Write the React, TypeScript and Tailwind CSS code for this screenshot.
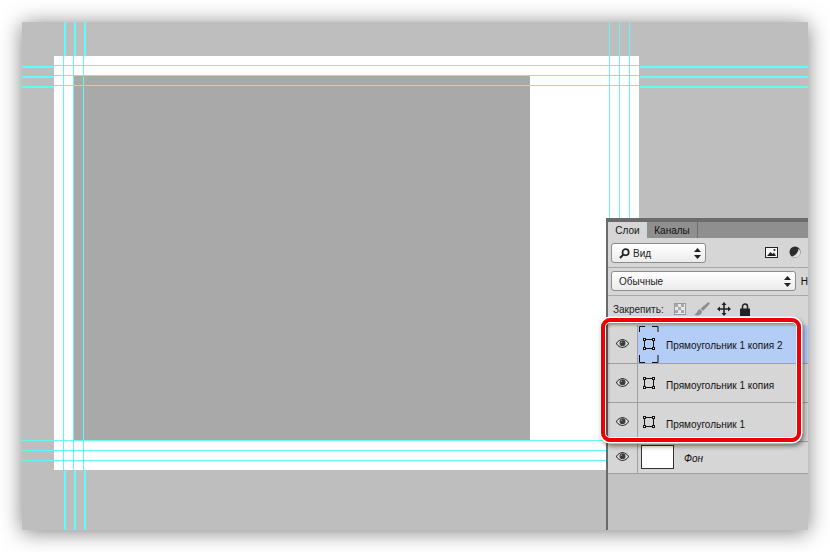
const guides = [
  // top stubs
  "left-[42px] top-0 h-[34px] w-[2px] bg-[#5ffcfc]",
  "left-[52px] top-0 h-[34px] w-[2px] bg-[#5ffcfc]",
  "left-[62px] top-0 h-[34px] w-[2px] bg-[#5ffcfc]",
  // bottom stubs
  "left-[42px] top-[448px] h-[60px] w-[2px] bg-[#5ffcfc]",
  "left-[52px] top-[448px] h-[60px] w-[2px] bg-[#5ffcfc]",
  "left-[62px] top-[448px] h-[60px] w-[2px] bg-[#5ffcfc]",
  // over the canvas
  "left-[41px] top-[34px] h-[414px] w-px bg-[#66f5f5]",
  "left-[51px] top-[34px] h-[414px] w-px bg-[#66f5f5]",
  "left-[61px] top-[34px] h-[414px] w-px bg-[#66f5f5]",
  "left-[587px] top-0 h-[196px] w-px bg-[#66f5f5]",
  "left-[597px] top-0 h-[196px] w-px bg-[#66f5f5]",
  "left-[607px] top-0 h-[196px] w-px bg-[#66f5f5]",
  // left stubs
  "left-0 top-[44px] h-[2px] w-[32px] bg-[#5ffcfc]",
  "left-0 top-[54px] h-[2px] w-[32px] bg-[#5ffcfc]",
  "left-0 top-[64px] h-[2px] w-[32px] bg-[#5ffcfc]",
  // across the canvas
  "left-[32px] top-[43px] h-px w-[585px] bg-[#66f5f5]",
  "left-[32px] top-[53px] h-px w-[585px] bg-[#66f5f5]",
  "left-[32px] top-[63px] h-px w-[585px] bg-[#66f5f5]",
  // right stubs
  "left-[618px] top-[44px] h-[2px] w-[168px] bg-[#5ffcfc]",
  "left-[618px] top-[54px] h-[2px] w-[168px] bg-[#5ffcfc]",
  "left-[618px] top-[64px] h-[2px] w-[168px] bg-[#5ffcfc]",
  // bottom rows
  "left-0 top-[418px] h-px w-[584px] bg-[#66f5f5]",
  "left-0 top-[428px] h-px w-[584px] bg-[#66f5f5]",
  "left-0 top-[438px] h-px w-[584px] bg-[#66f5f5]",
];

function Eye() {
  return (
    <svg width="13" height="9" viewBox="0 0 13 9">
      <path d="M0.3 4.5C2.5 1.5 4.5.5 6.5.5s4 1 6.2 4C10.5 7.5 8.5 8.5 6.5 8.5s-4-1-6.2-4Z" fill="#e4e4e4" stroke="#3c3c3c" strokeWidth="1.1" />
      <circle cx="6.5" cy="4.2" r="3" fill="#3c3c3c" />
      <circle cx="5.4" cy="3.3" r="0.8" fill="#9a9a9a" />
    </svg>
  );
}

function ShapeIcon() {
  return (
    <svg width="12" height="12" viewBox="0 0 12 12" fill="none" stroke="#111">
      <rect x="1.5" y="1.5" width="9" height="9" />
      <rect x="0.5" y="0.5" width="2" height="2" fill="#fff" />
      <rect x="9.5" y="0.5" width="2" height="2" fill="#fff" />
      <rect x="0.5" y="9.5" width="2" height="2" fill="#fff" />
      <rect x="9.5" y="9.5" width="2" height="2" fill="#fff" />
    </svg>
  );
}

function Brackets() {
  return (
    <svg className="absolute left-[1px] top-[1px]" width="20" height="37" viewBox="0 0 20 37" fill="none" stroke="#111" strokeWidth="1">
      <path d="M6 .5H.5V6M13 .5H19V6M6 36.5H.5V29M13 36.5H19V29" />
    </svg>
  );
}

function UpDown() {
  return (
    <svg width="7" height="11" viewBox="0 0 7 11" fill="#222">
      <path d="M3.5 0 7 4H0ZM3.5 11 0 7h7Z" />
    </svg>
  );
}

function Select({ children, className }: { children: React.ReactNode; className: string }) {
  return (
    <div className={`flex h-5 items-center justify-between rounded-[3px] border border-[#8c8c8c] bg-gradient-to-b from-white to-[#ececec] pr-[4px] text-[10px] text-[#222] ${className}`}>
      {children}
      <UpDown />
    </div>
  );
}

function LayerRow({ name, active, showMask }: { name: string; active?: boolean; showMask?: boolean }) {
  return (
    <div className={`flex h-[39px] border-b border-[#a0a0a0] ${active ? "bg-[#b4cdf6]" : "bg-[#d6d6d6]"}`}>
      <div className="flex w-[30px] justify-center border-r border-[#a0a0a0] bg-[#d6d6d6] pt-[14px]">
        <div className="h-[9px]">
          <Eye />
        </div>
      </div>
      <div className="relative w-[28px] shrink-0 pl-[5px] pt-[13px]">
        {showMask && <Brackets />}
        <ShapeIcon />
      </div>
      <div className={`text-[10px] leading-[15px] whitespace-nowrap text-[#111] ${active ? "pt-[13px]" : "pt-[14px]"}`}>{name}</div>
    </div>
  );
}

export default function App() {
  return (
    <div className="h-[552px] w-[830px] overflow-hidden bg-white p-[22px] font-['Liberation_Sans',sans-serif]">
      <div className="relative h-[508px] w-[786px] bg-[#bebebe] pl-[32px] pt-[34px] shadow-[0_2px_20px_rgba(0,0,0,0.5)]">
        <div className="h-[414px] w-[585px] bg-white pl-[19px] pt-[20px]">
          <div className="h-[364px] w-[457px] bg-[#a9a9a9]" />
        </div>

        {guides.map((g) => (
          <div key={g} className={`absolute ${g}`} />
        ))}

        {/* layers panel */}
        <div className="absolute bottom-0 right-0 top-[196px] flex w-[202px] flex-col border-l-2 border-[#6a6a6a] bg-[#c3c3c3]">
          <div className="h-[4px] bg-[#6b6b6b]" />
          <div className="flex h-[16px] bg-[#8f8f8f] text-[10px] text-[#111]">
            <div className="flex w-[39px] items-center justify-center bg-[#d6d6d6]">Слои</div>
            <div className="flex w-[51px] items-center justify-center border-r border-[#6f6f6f]">Каналы</div>
          </div>

          <div className="flex h-[30px] items-start border-b border-[#a8a8a8] bg-[#d6d6d6] pl-[3px] pt-[5px]">
            <Select className="w-[95px]">
              <span className="flex items-center gap-[3px] pl-[7px]">
                <svg width="11" height="11" viewBox="0 0 11 11" fill="none" stroke="#222" strokeWidth="1.7">
                  <circle cx="6.6" cy="4.2" r="3.1" />
                  <path d="M4.3 6.6 1 10" strokeWidth="2" />
                </svg>
                Вид
              </span>
            </Select>
            <svg className="ml-[59px] mt-[4px]" width="13" height="11" viewBox="0 0 13 11">
              <rect x="0.5" y="0.5" width="12" height="10" fill="#f4f4f4" stroke="#222" />
              <path d="M2 9 5.5 5l2 2 1.5-1.5L11 9Z" fill="#222" />
              <circle cx="9.5" cy="3" r="1" fill="#222" />
            </svg>
            <svg className="ml-[11px] mt-[3px]" width="12" height="12" viewBox="0 0 12 12">
              <circle cx="6" cy="6" r="5.5" fill="#2c2c2c" />
              <path d="M9.5 2.5A5 5 0 0 1 3 10.3 8 8 0 0 0 9.5 2.5Z" fill="#e0e0e0" />
            </svg>
          </div>

          <div className="flex h-[28px] items-start border-b border-[#a8a8a8] bg-[#d6d6d6] pl-[3px] pt-[3px]">
            <Select className="w-[187px]">
              <span className="pl-[7px]">Обычные</span>
            </Select>
            <span className="ml-[5px] mt-[3px] text-[10px] text-[#111]">Н</span>
          </div>

          <div className="flex h-[29px] items-center bg-[#d6d6d6] pl-[5px] text-[10px] text-[#222]">
            <span className="w-[61px] pb-[3px]">Закрепить:</span>
            <div className="flex items-center pb-[3px]">
              <svg width="12" height="12" viewBox="0 0 12 12">
                <rect x="0.5" y="0.5" width="11" height="11" fill="#e8e8e8" stroke="#9a9a9a" />
                <path d="M1 1h3v3H1ZM7 1h3v3H7ZM4 4h3v3H4ZM1 7h3v3H1ZM7 7h3v3H7Z" fill="#a8a8a8" />
              </svg>
              <svg className="ml-[8px]" width="16" height="14" viewBox="0 0 16 14" fill="#8e8e8e">
                <path d="M14.5 0 6.5 6.5l2.5 2.5L16 1.5Z" />
                <path d="M6 7.3C3 7.5 4 11.5 0 12.8c3 1.5 7.5 1 8.2-3.3Z" />
              </svg>
              <svg className="ml-[7px]" width="14" height="14" viewBox="0 0 14 14" fill="#222">
                <path d="M7 0 9.5 3H7.8v3.2H11V4.5L14 7l-3 2.5V7.8H7.8V11h1.7L7 14l-2.5-3h1.7V7.8H3v1.7L0 7l3-2.5v1.7h3.2V3H4.5Z" />
              </svg>
              <svg className="ml-[9px]" width="10" height="13" viewBox="0 0 10 13" fill="none">
                <path d="M2.5 6V3.5a2.5 2.5 0 0 1 5 0V6" stroke="#222" strokeWidth="1.5" />
                <rect x="0" y="5.5" width="10" height="7.5" rx="0.5" fill="#222" />
              </svg>
            </div>
          </div>

          <LayerRow name="Прямоугольник 1 копия 2" active showMask />
          <LayerRow name="Прямоугольник 1 копия" />
          <LayerRow name="Прямоугольник 1" />

          <div className="flex h-[32px] border-b border-[#a0a0a0] bg-[#d6d6d6]">
            <div className="flex w-[30px] justify-center border-r border-[#a0a0a0] pt-[10px]">
              <div className="h-[9px]">
                <Eye />
              </div>
            </div>
            <div className="ml-[3px] mt-[3px] h-[24px] w-[33px] border border-[#333] bg-white" />
            <span className="ml-[10px] pt-[9px] text-[10px] italic leading-[15px] text-[#111]">Фон</span>
          </div>
        </div>

        {/* red callout */}
        <div className="absolute left-[579px] top-[296px] h-[124px] w-[200px] rounded-[9px] border-4 border-[#f00000] shadow-[0_0_0_1.5px_#fff,2px_3px_5px_1px_rgba(0,0,0,0.5),inset_0_0_0_1px_#fff,inset_2px_2px_3px_1px_rgba(0,0,0,0.35)]" />
      </div>
    </div>
  );
}
